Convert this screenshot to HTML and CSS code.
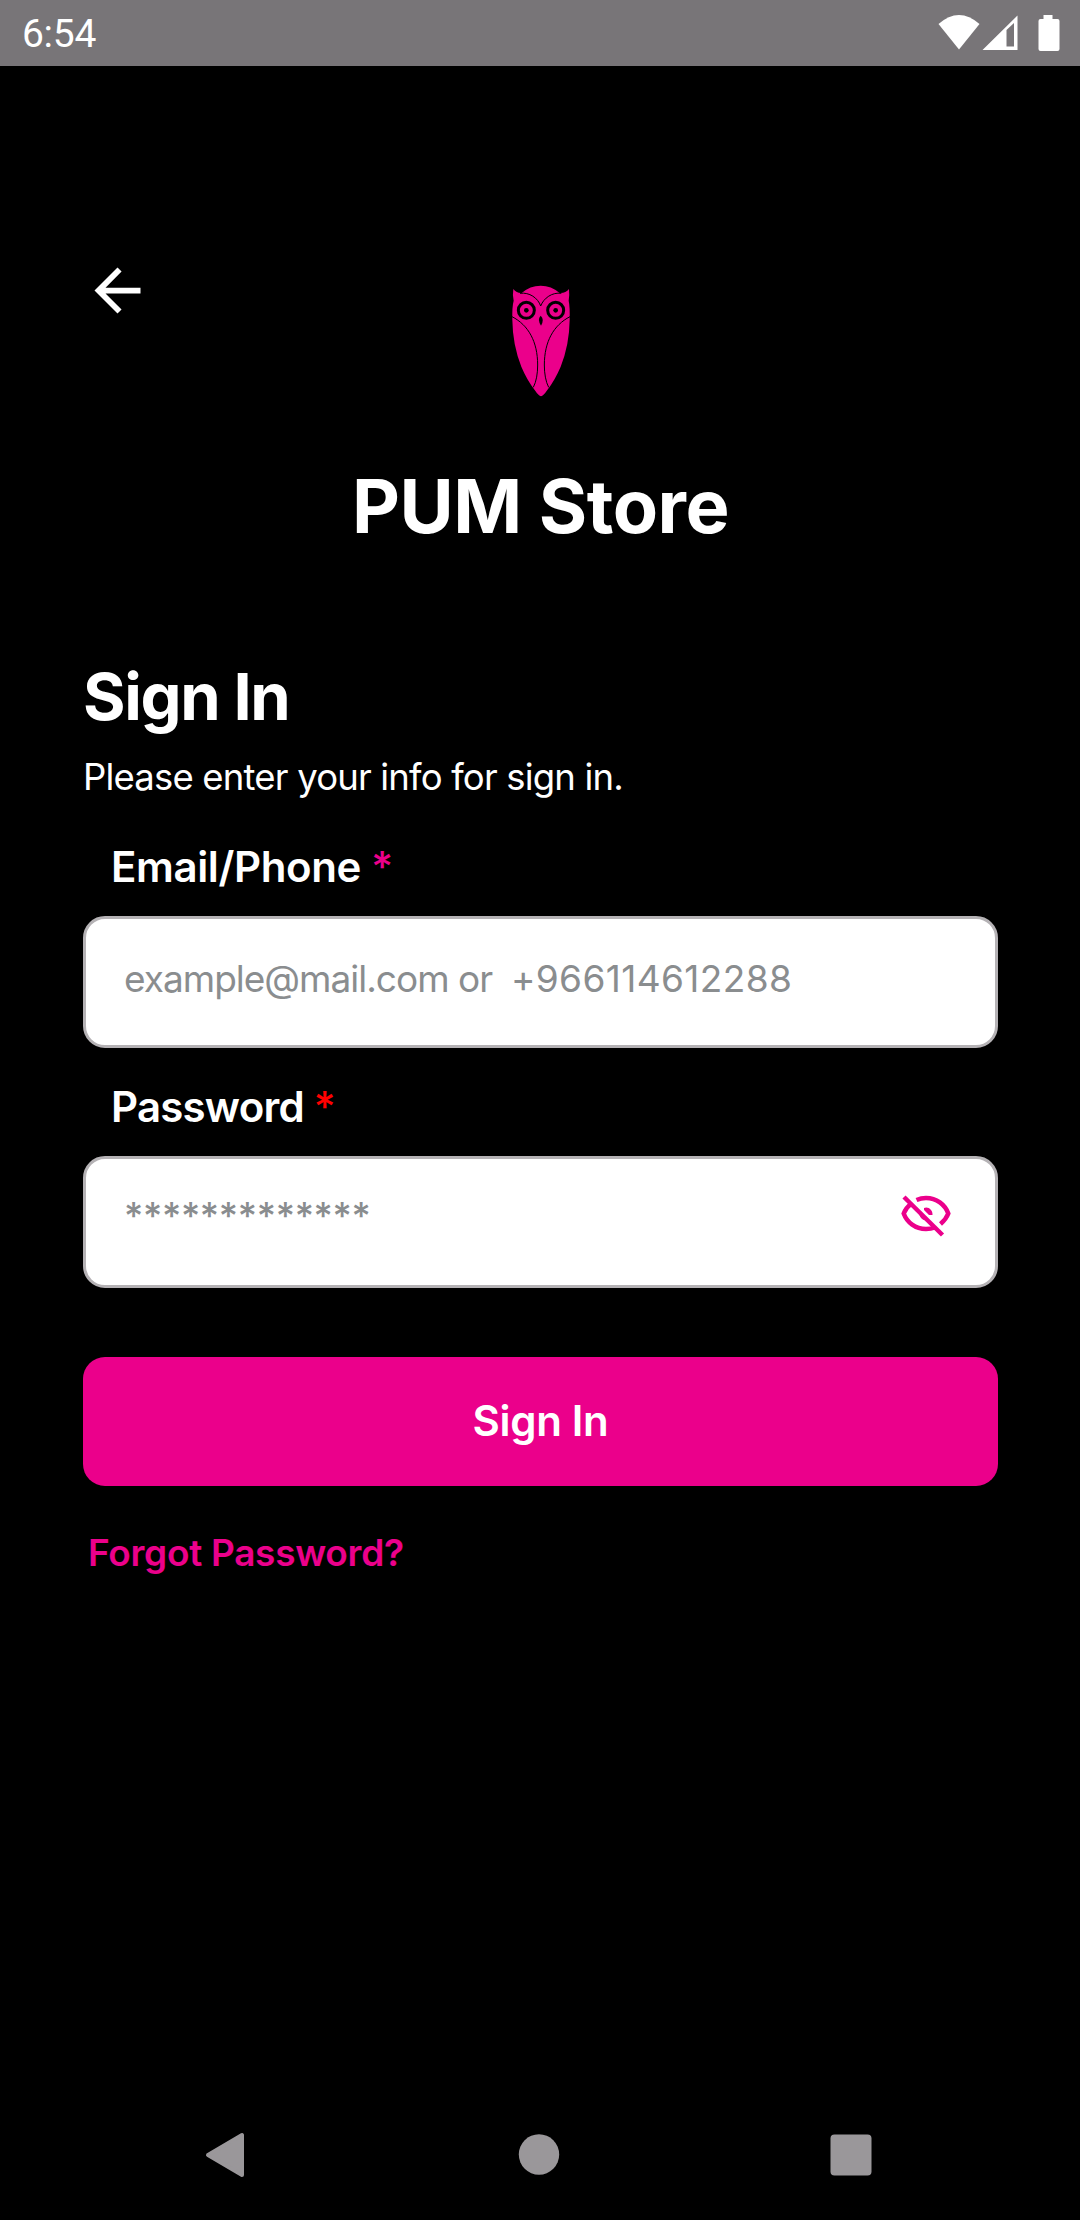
FILE: index.html
```html
<!DOCTYPE html>
<html lang="en">
<head>
<meta charset="utf-8">
<title>PUM Store</title>
<link rel="stylesheet" href="styles.css">
</head>
<body>
<div class="screen">
  <header class="status">
    <span class="time">6:54</span>
    <svg class="status-icons" viewBox="0 0 120 36" fill="#fff">
      <path d="M0 9Q20.500-9 41 9L20.500 34.500Z"/>
      <path fill-rule="evenodd" d="M44 35L79 .5V35ZM68 15V31.500H75.500V8Z"/>
      <path d="M105 0h9v4h5a2 2 0 0 1 2 2v28a2 2 0 0 1-2 2h-17a2 2 0 0 1-2-2v-28a2 2 0 0 1 2-2h3z"/>
    </svg>
  </header>
  <main class="content">
    <div class="brand">
      <svg class="back" viewBox="0 0 24 24" fill="#fff"><path d="M20 11H7.830l5.590-5.590L12 4l-8 8 8 8 1.410-1.410L7.830 13H20v-2z"/></svg>
      <svg class="owl" viewBox="66 45 174 336">
        <path fill="#eb008b" d="M70 57Q80 70 95 69Q120 47 152 47Q184 47 209 69Q227 70 237 57Q239 75 236 92Q240 110 239 150Q238 225 212 290Q195 330 172 360Q160 378 153 379Q146 378 134 360Q111 330 94 290Q68 225 67 150Q66 110 71 92Q67 75 70 57Z"/>
        <path fill="none" stroke="#000" stroke-width="3" d="M90 70C118 66 144 84 152 108C161 84 187 66 214 70M66 140C115 165 143 215 143 285C143 310 139 335 130 352M240 140C191 165 163 215 163 285C163 310 167 335 176 352"/>
        <g fill="#eb008b" stroke="#000" stroke-width="9"><circle cx="109" cy="121" r="24"/><circle cx="197" cy="121" r="24"/></g>
        <circle cx="109" cy="121" r="7"/><circle cx="197" cy="121" r="7"/>
        <path d="M152 137Q164 147 153 167Q141 147 152 137Z"/>
      </svg>
    </div>
    <h1 class="title">PUM Store</h1>
    <h2 class="heading">Sign In</h2>
    <p class="sub">Please enter your info for sign in.</p>
    <div class="label">Email/Phone <span class="star">*</span></div>
    <div class="field"><span class="hint">example@mail.com or&nbsp; <span class="phone">+966114612288</span></span></div>
    <div class="label tight">Password <span class="star red">*</span></div>
    <div class="field">
      <span class="hint mask">*************</span>
      <svg class="eye" viewBox="0 0 50 42" fill="none" stroke="#eb008b" stroke-width="4.500">
        <path d="M15.500 5Q20 3 25 3C35.500 3 44 9.500 47.300 18.500C45.800 22.500 43.500 25.500 39.500 29"/>
        <path d="M10.500 8.500C7 11 4.500 14 2.700 18.500C6 27.500 14.500 34 25 34Q30 34 34 32.500"/>
        <path d="M3 2L41.500 40"/>
        <path stroke="none" fill="#eb008b" d="M23 13C27 11 32 15 31.500 20H28L23 15ZM18 17C18 22 21.500 25.500 26 25.500Z"/>
      </svg>
    </div>
    <button class="submit">Sign In</button>
    <a class="forgot">Forgot Password?</a>
  </main>
  <nav class="nav">
    <svg viewBox="0 0 42 46"><path stroke="#9a979a" stroke-width="4" stroke-linejoin="round" d="M3 23L37 3V43Z"/></svg>
    <svg viewBox="0 0 42 46"><circle cx="21" cy="22.500" r="20.200"/></svg>
    <svg viewBox="0 0 42 46"><rect x=".5" y="2.500" width="41" height="41" rx="4"/></svg>
  </nav>
</div>
</body>
</html>
```
FILE: styles.css
```css
* { box-sizing: border-box; }
body { margin: 0; background: #000; color: #fff; font-family: Inter, sans-serif; }
.screen { width: 1080px; height: 2220px; display: flex; flex-direction: column; overflow: hidden; }
.status { height: 66px; flex: none; background: #787578; display: flex; justify-content: space-between; padding: 0 21px 0 22px; }
.time { font: 400 39px/69px Roboto, sans-serif; letter-spacing: -.3px; }
.status-icons { width: 121px; height: 36px; margin-top: 15px; overflow: visible; }
.content { flex: 1; padding: 190px 82px 0 83px; display: flex; flex-direction: column; }
.brand { height: 205px; display: grid; grid-template-columns: 1fr auto 1fr; align-items: start; }
.back { width: 69px; height: 69px; }
.owl { width: 58px; height: 112px; margin-top: 29px; }
.title { margin: 0; font-size: 74px; line-height: 90px; font-weight: 700; letter-spacing: -.45px; text-align: center; }
.heading { margin: 106px 0 0; font-size: 65px; line-height: 80px; font-weight: 700; letter-spacing: -1.33px; }
.sub { margin: 18px 0 0; font-size: 36.5px; line-height: 44px; letter-spacing: -.82px; }
.label { height: 50px; margin: 43px 0 24px 28px; font-size: 42px; line-height: 50px; font-weight: 600; letter-spacing: -.38px; }
.field + .label { margin-top: 34px; }
.tight { letter-spacing: -.78px; }
.star { font-weight: 500; color: #eb008b; }
.red { color: #f00; }
.field { height: 132px; flex: none; background: #fff; border: 3px solid #b5b2b5; border-radius: 22px; padding: 0 44px 0 38px; display: flex; justify-content: space-between; align-items: flex-start; }
.hint { color: #8a8d8f; font-size: 37px; line-height: 44px; margin-top: 38px; white-space: nowrap; letter-spacing: -1px; }
.phone { letter-spacing: .4px; }
.mask { margin-top: 35px; letter-spacing: -.3px; font-weight: 500; }
.eye { width: 50px; height: 42px; margin-top: 36px; }
.submit { flex: none; height: 129px; margin: 69px 0 0; padding: 0 0 3px; border: 0; border-radius: 22px; background: #eb008b; color: #fff; font: 600 42px Inter, sans-serif; letter-spacing: -.33px; }
.forgot { margin: 45px 0 0 5px; font-size: 37px; line-height: 44px; font-weight: 600; letter-spacing: -.3px; color: #eb008b; }
.nav { flex: none; height: 88px; display: flex; justify-content: space-between; padding: 0 208px 0 205px; fill: #9a979a; }
.nav svg { width: 42px; height: 46px; }
```
